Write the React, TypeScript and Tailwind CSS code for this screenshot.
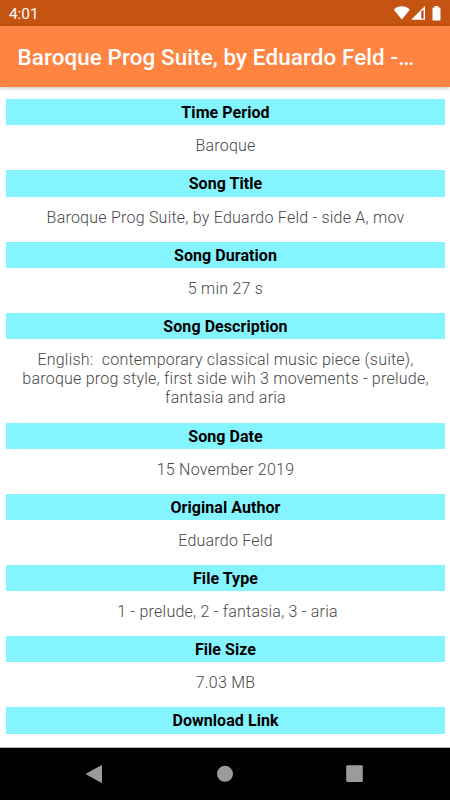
import React from "react";

type Field = {
    label: string;
    lines: string[];
};

const fields: Field[] = [
    { label: "Time Period", lines: ["Baroque"] },
    { label: "Song Title", lines: ["Baroque Prog Suite, by Eduardo Feld - side A, mov"] },
    { label: "Song Duration", lines: ["5 min 27 s"] },
    {
        label: "Song Description",
        lines: [
            "English:  contemporary classical music piece (suite),",
            "baroque prog style, first side wih 3 movements - prelude,",
            "fantasia and aria",
        ],
    },
    { label: "Song Date", lines: ["15 November 2019"] },
    { label: "Original Author", lines: ["Eduardo Feld"] },
    { label: "File Type", lines: [" 1 - prelude, 2 - fantasia, 3 - aria"] },
    { label: "File Size", lines: ["7.03 MB"] },
    { label: "Download Link", lines: [] },
];

function StatusBar() {
    return (
        <div className="h-[26px] shrink-0 bg-[#c55312] flex items-center justify-between pl-[9px] pr-2 text-white">
            <span className="text-[15.5px] leading-none pt-[3px] tracking-[-0.1px]">4:01</span>
            <svg width="50" height="16" viewBox="0 0 50 16" fill="currentColor">
                <path d="M1.8 4.8C5.8 .2 13.8 .2 17.8 4.8L9.8 14.4Z" />
                {/* signal triangle with the hollow end */}
                <path d="M19.2 14.8L33 1v13.8Z" />
                <path d="M29.4 6.5L31.5 4.4v9h-2.1Z" fill="#c5300c" />
                <path d="M42.7 1h3.6v1.4h1.5c.5 0 .7.3.7.7v11.6c0 .5-.3.8-.7.8h-6.6c-.5 0-.7-.3-.7-.8V3.1c0-.4.2-.7.7-.7h1.5Z" />
            </svg>
        </div>
    );
}

function FieldRow({ label, lines }: Field) {
    return (
        <section className="text-center text-[16px]">
            <h2 className="h-[26.2px] pl-px bg-[#84f4ff] font-bold leading-[27px] tracking-[0.06px] text-black">{label}</h2>
            {lines.length > 0 && (
                <div className="pl-px pt-[11px] pb-[14.9px] font-light leading-[19.15px] tracking-[0.23px] text-[#484848] whitespace-pre">
                    {lines.map((line) => (
                        <p key={line}>{line}</p>
                    ))}
                </div>
            )}
        </section>
    );
}

function NavBar() {
    return (
        <nav className="h-[52px] shrink-0 bg-black text-[#9b9b9b]">
            <svg width="450" height="52" viewBox="0 0 450 52" fill="currentColor">
                <path d="M101.2 17.3c.5-.3.8-.1.8.4v16.6c0 .5-.3.7-.8.4L86.3 26.5c-.5-.3-.5-.7 0-1Z" />
                <circle cx="225" cy="25.8" r="8" />
                <rect x="346.2" y="17.3" width="16.6" height="16.6" rx="1" />
            </svg>
        </nav>
    );
}

export default function App() {
    return (
        <div className="w-[450px] h-[800px] overflow-hidden flex flex-col bg-white font-['Roboto',sans-serif]">
            <StatusBar />
            <header className="h-[61px] shrink-0 bg-[#ff8341] flex items-center pl-[17.5px] pt-[3px] shadow-[0_1px_4px_rgba(0,0,0,0.25)]">
                <h1 className="text-[22.4px] font-medium tracking-[0.11px] text-white whitespace-nowrap">
                    Baroque Prog Suite, by Eduardo Feld -…
                </h1>
            </header>
            <main className="flex-1 min-h-0 overflow-hidden pt-[12.25px] px-[5.5px] border-b border-[#b0b0b0]">
                {fields.map((field) => (
                    <FieldRow key={field.label} {...field} />
                ))}
            </main>
            <NavBar />
        </div>
    );
}
